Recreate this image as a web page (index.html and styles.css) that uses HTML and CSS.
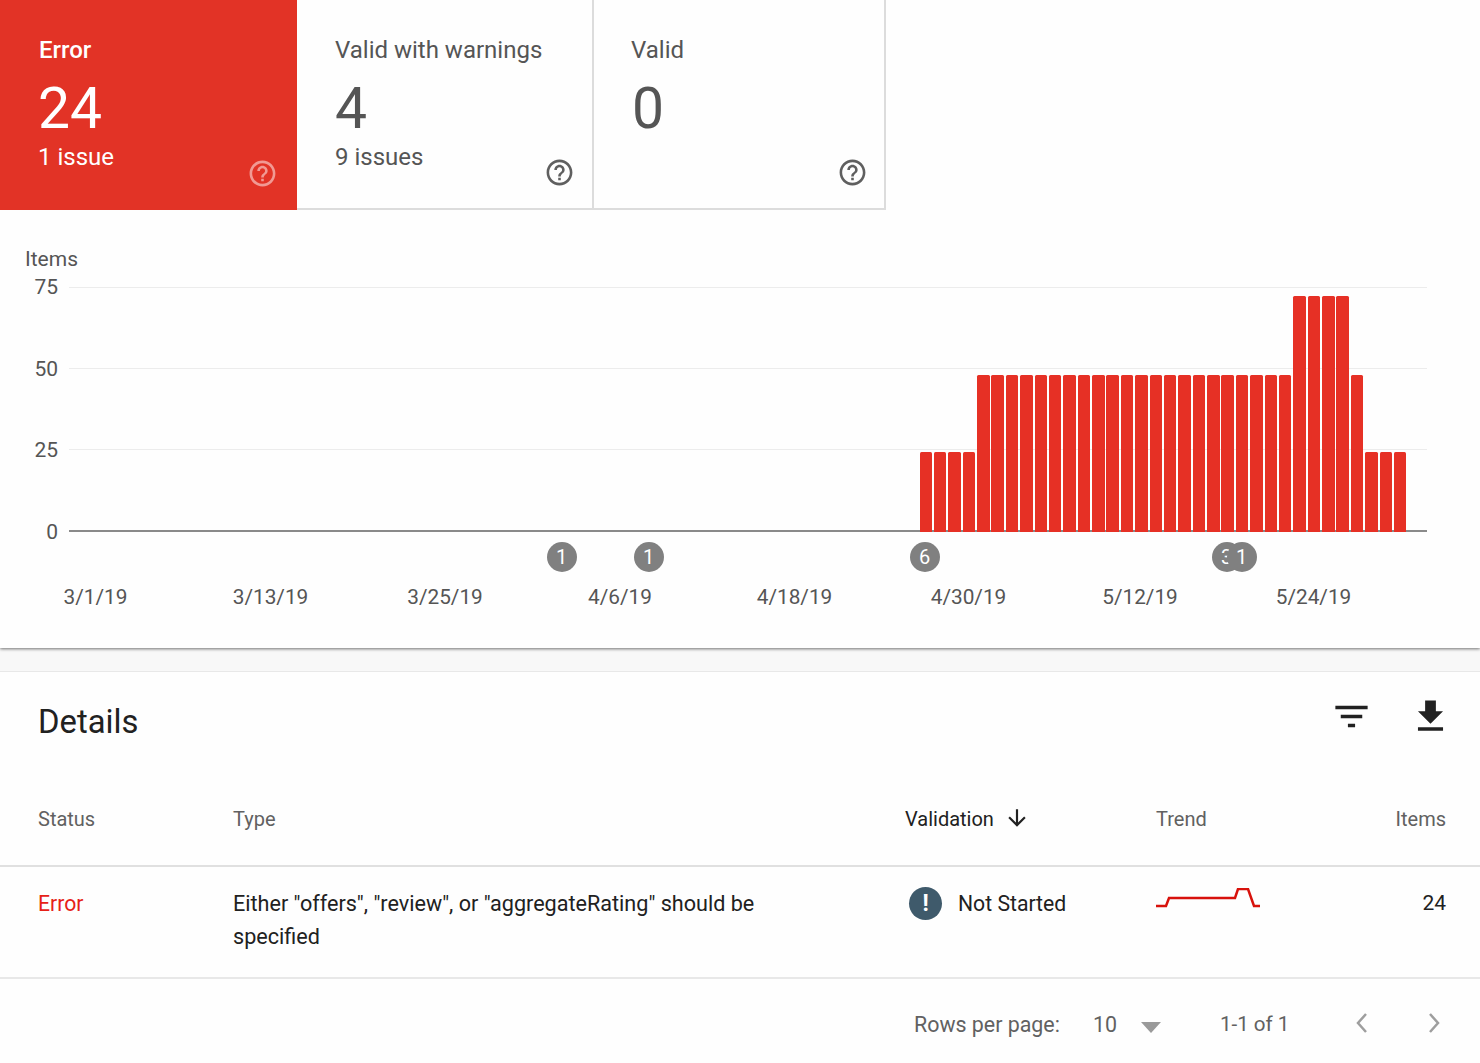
FILE: index.html
```
<!DOCTYPE html>
<html lang="en">
<head>
<meta charset="utf-8">
<title>Details</title>
<link rel="stylesheet" href="styles.css">
</head>
<body>
<section class="summary">
  <div class="cards">
    <div class="card card-error">
      <div class="card-label">Error</div>
      <div class="card-num">24</div>
      <div class="card-sub">1 issue</div>
      <svg class="help" viewBox="0 0 24 24"><path d="M11 18h2v-2h-2v2zm1-16C6.48 2 2 6.48 2 12s4.48 10 10 10 10-4.48 10-10S17.52 2 12 2zm0 18c-4.41 0-8-3.59-8-8s3.59-8 8-8 8 3.59 8 8-3.59 8-8 8zm0-14c-2.21 0-4 1.79-4 4h2c0-1.1.9-2 2-2s2 .9 2 2c0 2-3 1.75-3 5h2c0-2.25 3-2.5 3-5 0-2.21-1.79-4-4-4z"/></svg>
    </div>
    <div class="card">
      <div class="card-label">Valid with warnings</div>
      <div class="card-num">4</div>
      <div class="card-sub">9 issues</div>
      <svg class="help" viewBox="0 0 24 24"><path d="M11 18h2v-2h-2v2zm1-16C6.48 2 2 6.48 2 12s4.48 10 10 10 10-4.48 10-10S17.52 2 12 2zm0 18c-4.41 0-8-3.59-8-8s3.59-8 8-8 8 3.59 8 8-3.59 8-8 8zm0-14c-2.21 0-4 1.79-4 4h2c0-1.1.9-2 2-2s2 .9 2 2c0 2-3 1.75-3 5h2c0-2.25 3-2.5 3-5 0-2.21-1.79-4-4-4z"/></svg>
    </div>
    <div class="card card-last">
      <div class="card-label">Valid</div>
      <div class="card-num">0</div>
      <svg class="help" viewBox="0 0 24 24"><path d="M11 18h2v-2h-2v2zm1-16C6.48 2 2 6.48 2 12s4.48 10 10 10 10-4.48 10-10S17.52 2 12 2zm0 18c-4.41 0-8-3.59-8-8s3.59-8 8-8 8 3.59 8 8-3.59 8-8 8zm0-14c-2.21 0-4 1.79-4 4h2c0-1.1.9-2 2-2s2 .9 2 2c0 2-3 1.75-3 5h2c0-2.25 3-2.5 3-5 0-2.21-1.79-4-4-4z"/></svg>
    </div>
  </div>
  <div class="chart">
    <div class="axis-title">Items</div>
    <div class="plot-wrap">
      <div class="y-labels"><span>75</span><span>50</span><span>25</span><span>0</span></div>
      <div class="plot">
        <div class="grid"><i></i><i></i><i></i><i class="base"></i></div>
        <div class="bars" id="bars"></div>
      </div>
    </div>
    <div class="markers">
      <span class="marker" style="left:546.5px">1</span>
      <span class="marker" style="left:633.5px">1</span>
      <span class="marker" style="left:909.5px">6</span>
      <span class="marker" style="left:1211.5px">3</span>
      <span class="marker" style="left:1226.5px">1</span>
    </div>
    <div class="x-labels">
      <span style="left:95.5px">3/1/19</span>
      <span style="left:270.5px">3/13/19</span>
      <span style="left:445px">3/25/19</span>
      <span style="left:620px">4/6/19</span>
      <span style="left:794.5px">4/18/19</span>
      <span style="left:968.5px">4/30/19</span>
      <span style="left:1140px">5/12/19</span>
      <span style="left:1313.5px">5/24/19</span>
    </div>
  </div>
</section>
<div class="band"></div>
<section class="details">
  <header class="details-head">
    <h2>Details</h2>
    <div class="tools">
      <svg class="tool" viewBox="0 0 24 24"><path d="M10 18h4v-2h-4v2zM3 6v2h18V6H3zm3 7h12v-2H6v2z"/></svg>
      <svg class="tool" viewBox="0 0 24 24"><path d="M19 9h-4V3H9v6H5l7 7 7-7zM5 18v2h14v-2H5z"/></svg>
    </div>
  </header>
  <div class="row row-head">
    <div class="c-status">Status</div>
    <div class="c-type">Type</div>
    <div class="c-valid sorted">Validation <svg class="arrow" viewBox="0 0 24 24"><path d="M20 12l-1.41-1.41L13 16.17V4h-2v12.17l-5.58-5.59L4 12l8 8 8-8z"/></svg></div>
    <div class="c-trend">Trend</div>
    <div class="c-items">Items</div>
  </div>
  <div class="row row-body">
    <div class="c-status err">Error</div>
    <div class="c-type">Either "offers", "review", or "aggregateRating" should be specified</div>
    <div class="c-valid status-cell">
      <span class="status-dot">!</span>
      <span>Not Started</span>
    </div>
    <div class="c-trend">
      <svg class="spark" viewBox="0 0 104 24"><polyline points="0,18 10,18 13,10 79,10 82,1 92,1 98,18 104,18"/></svg>
    </div>
    <div class="c-items">24</div>
  </div>
  <footer class="pager">
    <span class="rows-label">Rows per page:</span>
    <span class="rows-val">10</span>
    <span class="caret"></span>
    <span class="range">1-1 of 1</span>
    <svg class="chev chev-prev" viewBox="0 0 14 22"><polyline points="11,2 3,11 11,20"/></svg>
    <svg class="chev chev-next" viewBox="0 0 14 22"><polyline points="3,2 11,11 3,20"/></svg>
  </footer>
</section>
<script src="bars.js"></script>
</body>
</html>
```
FILE: bars.js
```
var values = [80,80,80,80];
for (var i = 0; i < 22; i++) values.push(157);
values.push(236,236,236,236,157,80,80,80);
var host = document.getElementById('bars');
values.forEach(function (h) {
  var b = document.createElement('i');
  b.style.height = h + 'px';
  host.appendChild(b);
});
```
FILE: styles.css
```
* { box-sizing: border-box; }
html, body { margin: 0; padding: 0; }
body {
  width: 1480px;
  height: 1063px;
  overflow: hidden;
  background: #fefefe;
  font-family: Roboto, "Liberation Sans", sans-serif;
  color: #212121;
}
.summary {
  height: 648px;
  background: #fefefe;
  box-shadow: 0 1px 3px rgba(0,0,0,.55);
  position: relative;
}
.cards { display: flex; height: 210px; }
.card {
  width: 297px;
  height: 210px;
  padding: 34px 0 0 38px;
  border-right: 2px solid #dcdcdc;
  border-bottom: 2px solid #dcdcdc;
  color: #555;
  position: relative;
}
.card-error {
  background: #e23326;
  color: #fff;
  border: 0;
  padding-left: 38px;
}
.card-last { width: 292px; padding-left: 37px; }
.card-label { font-size: 24px; line-height: 32px; }
.card-error .card-label { font-weight: 500; margin-left: 1px; }
.card-num { font-size: 57px; line-height: 64px; margin-top: 11px; }
.card-last .card-num { margin-left: 1px; }
.card-sub { font-size: 24px; line-height: 32px; }
.help {
  position: absolute;
  width: 31px;
  height: 31px;
  right: 17px;
  bottom: 20px;
  fill: #5f5f5f;
}
.card-error .help { fill: rgba(255,255,255,.5); right: 19px; bottom: 21px; }
.card-last .help { right: 16px; }
.chart { position: relative; padding: 37px 0 0 25px; }
.axis-title { font-size: 21px; line-height: 24px; color: #555; }
.plot-wrap { display: flex; height: 246px; margin-top: 16px; }
.y-labels {
  width: 33px;
  display: flex;
  flex-direction: column;
  justify-content: space-between;
  align-items: flex-end;
  font-size: 21px;
  line-height: 0;
  color: #555;
  padding: 0 0 1px;
}
.y-labels span { display: block; height: 0; }
.plot { margin-left: 11px; width: 1358px; height: 245px; position: relative; }
.grid {
  height: 100%;
  display: flex;
  flex-direction: column;
  justify-content: space-between;
}
.grid i { display: block; height: 1px; background: #ececec; }
.grid i.base { height: 2px; background: #8a8a8a; }
.bars {
  position: absolute;
  left: 850.5px;
  bottom: 0;
  display: flex;
  align-items: flex-end;
  gap: 1.88px;
}
.bars i {
  display: block;
  width: 12.5px;
  background: #e63025;
  border-radius: 1.5px 1.5px 0 0;
}
.markers { position: relative; height: 30px; margin: 9px 0 0 -25px; }
.marker {
  position: absolute;
  top: 0;
  width: 30px;
  height: 30px;
  border-radius: 50%;
  background: #808080;
  color: #fff;
  font-size: 20px;
  line-height: 30px;
  text-align: center;
}
.x-labels { position: relative; height: 28px; margin: 11px 0 0 -25px; }
.x-labels span {
  position: absolute;
  transform: translateX(-50%);
  font-size: 20.8px;
  line-height: 28px;
  color: #555;
}
.band {
  height: 24px;
  background: #f8f8f8;
  border-bottom: 1px solid #e8e8e8;
}
.details { height: 391px; }
.details-head {
  height: 111px;
  padding: 29px 28px 0 38px;
  display: flex;
  justify-content: space-between;
  align-items: flex-start;
}
h2 { margin: 0; font-weight: 400; font-size: 32.8px; line-height: 42px; color: #212121; }
.tools { display: flex; gap: 36px; margin-top: -6px; }
.tool { width: 43px; height: 43px; fill: #212121; }
.row {
  display: grid;
  grid-template-columns: 195px 672px 251px 1fr auto;
  padding: 0 34px 0 38px;
  font-size: 21.6px;
  line-height: 33px;
}
.row-head {
  height: 84px;
  padding-top: 20px;
  color: #616161;
  border-bottom: 2px solid #e0e0e0;
  font-size: 20px;
}
.sorted { color: #212121; display: flex; align-items: flex-start; gap: 10px; }
.arrow { width: 26px; height: 26px; fill: #212121; margin-top: 2px; }
.row-body {
  height: 112px;
  padding-top: 20px;
  border-bottom: 2px solid #e8e8e8;
}
.err { color: #e62117; font-size: 21.2px; }
.row-body .c-items { font-size: 21px; }
.c-type { padding-right: 110px; }
.status-cell { display: flex; align-items: flex-start; gap: 16px; padding-left: 4px; font-size: 21.2px; }
.status-dot {
  width: 33px;
  height: 33px;
  border-radius: 50%;
  background: #3f5a6b;
  color: #fff;
  font-weight: 700;
  font-size: 23px;
  line-height: 33px;
  text-align: center;
}
.spark { display: block; width: 104px; height: 24px; margin-top: 1px; }
.spark polyline { fill: none; stroke: #d8120c; stroke-width: 2.5; }
.c-items { justify-self: end; }
.pager {
  display: flex;
  align-items: center;
  height: 90px;
  padding: 0 0 0 914px;
  font-size: 21.4px;
  color: #616161;
}
.rows-val { margin-left: 33px; width: 48px; }
.caret {
  width: 0;
  height: 0;
  border-left: 10px solid transparent;
  border-right: 10px solid transparent;
  border-top: 11px solid #9a9a9a;
  margin-top: 6px;
}
.range { margin-left: 59px; width: 135px; font-size: 20.6px; }
.chev { width: 14px; height: 22px; margin-top: -2px; }
.chev polyline { fill: none; stroke: #9e9e9e; stroke-width: 2.5; }
.chev-next { margin-left: 58px; }
```
